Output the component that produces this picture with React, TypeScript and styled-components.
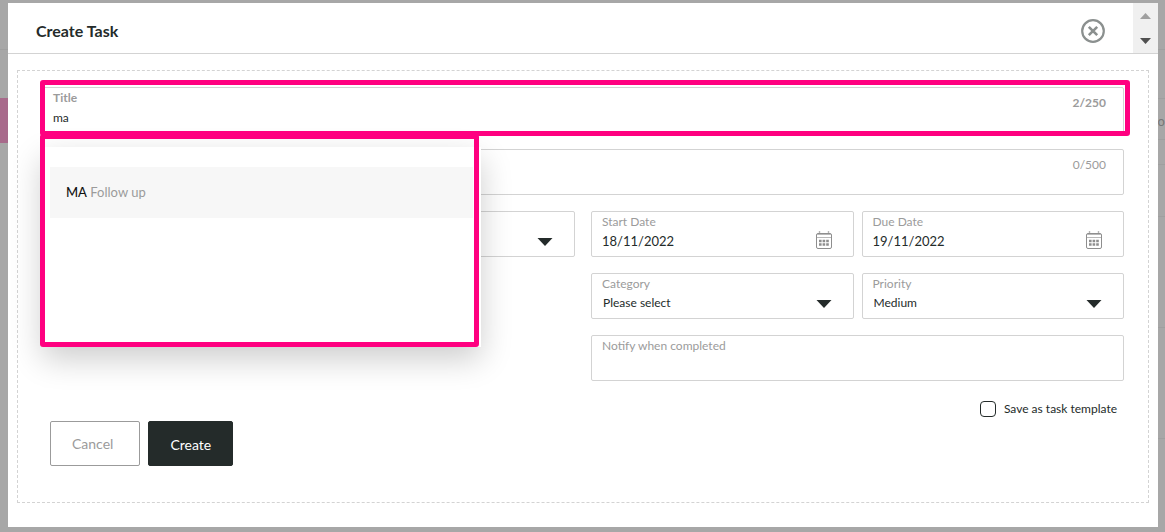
import React from "react";
import styled, { createGlobalStyle } from "styled-components";

const ink = "#242b2a";
const muted = "#9b9b9b";
const line = "#d3d3d3";
const accent = "#ff0080";

const GlobalStyle = createGlobalStyle`
  * { box-sizing: border-box; }
  body { margin: 0; background: #a7a7a7; font-family: Lato, "Liberation Sans", sans-serif; color: ${ink}; }
  button, input, select { font-family: inherit; color: inherit; }
`;

const Page = styled.div`
  position: relative;
  min-height: 100vh;
  padding: 3px 7px 5px 8px;
  overflow: hidden;
`;

const Backdrop = styled.div`
  position: absolute;
  inset: 0;
  display: flex;
  justify-content: space-between;
`;

const Edge = styled.div`
  width: 24px;
  padding-top: 49px;
`;

const Band = styled.div<{ $height: number; $color?: string }>`
  height: ${(p) => p.$height}px;
  background: ${(p) => p.$color ?? "transparent"};
  border-top: 1px solid ${(p) => p.$color ?? "#9f9f9f"};
`;

const BandText = styled.span`
  display: flex;
  justify-content: flex-end;
  padding-top: 13px;
  font-size: 13px;
  line-height: 18px;
  color: #777;
`;

const Modal = styled.section`
  position: relative;
  min-height: calc(100vh - 8px);
  background: #fff;
  display: flex;
  flex-direction: column;
`;

const Header = styled.header`
  display: flex;
  align-items: center;
  height: 51px;
  border-bottom: 1px solid ${line};
  padding-left: 28px;
`;

const Heading = styled.h1`
  flex: 1;
  margin: 0;
  padding-top: 6px;
  font-size: 16px;
  line-height: 20px;
  font-weight: 700;
`;

const CloseButton = styled.button`
  display: flex;
  margin: 6px 28px 0 0;
  padding: 0;
  border: 0;
  background: none;
`;

const Scroller = styled.div`
  display: flex;
  flex-direction: column;
  width: 25px;
  height: 50px;
  background: #f0f0f0;
`;

const ScrollButton = styled.button`
  flex: 1;
  display: flex;
  align-items: center;
  justify-content: center;
  padding: 0;
  border: 0;
  background: none;
`;

const Panel = styled.form`
  display: flex;
  flex-direction: column;
  gap: 16px;
  margin: 16px 9px 24px;
  padding: 16px 24px 36px;
  border: 1px dashed ${line};
`;

const Columns = styled.div`
  display: grid;
  grid-template-columns: 1fr 1fr;
  gap: 16px;
  align-items: start;
`;

const Pair = styled.div`
  display: grid;
  grid-template-columns: 1fr 1fr;
  gap: 8px;
`;

const Stack = styled.div`
  display: flex;
  flex-direction: column;
  gap: 16px;
`;

const TitleArea = styled.div`
  position: relative;
`;

const Field = styled.div`
  display: flex;
  height: 46px;
  padding-left: 10px;
  border: 1px solid ${line};
  border-radius: 2px;
  background: #fff;
`;

const FieldBody = styled.div`
  flex: 1;
  min-width: 0;
  display: flex;
  flex-direction: column;
  padding-top: 2px;
`;

const Label = styled.label<{ $bold?: boolean }>`
  font-size: 12px;
  line-height: 16px;
  font-weight: ${(p) => (p.$bold ? 700 : 400)};
  color: ${muted};
`;

const TextInput = styled.input<{ $large?: boolean }>`
  width: 100%;
  height: 22px;
  padding: 0;
  border: 0;
  outline: 0;
  background: none;
  font-size: ${(p) => (p.$large ? 13 : 12)}px;
`;

const Select = styled.select`
  appearance: none;
  width: 100%;
  height: 20px;
  padding: 0 0 0 1px;
  border: 0;
  outline: 0;
  background: none;
  font-size: 12px;
`;

const Counter = styled.span<{ $bold?: boolean }>`
  padding: 6px 17px 0 0;
  font-size: 12px;
  line-height: 18px;
  font-weight: ${(p) => (p.$bold ? 700 : 400)};
  color: ${muted};
`;

const IconSlot = styled.span`
  display: flex;
  justify-content: center;
  align-items: flex-end;
  width: 16px;
  margin-right: 21px;
  padding-bottom: 7px;
`;

const ArrowSlot = styled(IconSlot)`
  padding-bottom: 10px;
`;

const Highlight = styled.div`
  position: absolute;
  z-index: 2;
  inset: -7px -6px -3px -2px;
  border: 5px solid ${accent};
  border-radius: 3px;
  pointer-events: none;
`;

const Popup = styled.div`
  position: absolute;
  z-index: 1;
  top: 60px;
  left: 0;
  width: 439px;
  height: 200px;
  padding: 20px 8px;
  background: #fff;
  box-shadow: 0 12px 30px rgba(0, 0, 0, 0.2);
`;

const PopupHighlight = styled.div`
  position: absolute;
  z-index: 2;
  top: 47px;
  left: -2px;
  width: 439px;
  height: 213px;
  border: 5px solid ${accent};
  border-radius: 3px;
  pointer-events: none;
`;

const Option = styled.button`
  display: block;
  width: 100%;
  height: 51px;
  padding: 0 16px 2px;
  border: 0;
  background: #f7f7f7;
  text-align: left;
  font-size: 13px;
`;

const Match = styled.span`
  color: #111;
  font-weight: 500;
`;

const Rest = styled.span`
  color: ${muted};
`;

const SaveRow = styled.label`
  align-self: flex-end;
  display: flex;
  align-items: center;
  gap: 8px;
  margin-top: 4px;
  padding-right: 7px;
  font-size: 12px;
  line-height: 16px;
`;

const Checkbox = styled.input`
  appearance: none;
  width: 16px;
  height: 16px;
  margin: 0;
  border: 1px solid ${ink};
  border-radius: 4px;
`;

const Actions = styled.div`
  display: flex;
  gap: 8px;
  margin-top: -12px;
  padding-left: 8px;
`;

const ActionButton = styled.button<{ $primary?: boolean }>`
  height: 45px;
  padding: ${(p) => (p.$primary ? "2px 21px 0" : "0 26px 0 21px")};
  border: 1px solid ${(p) => (p.$primary ? ink : muted)};
  border-radius: 2px;
  background: ${(p) => (p.$primary ? ink : "#fff")};
  color: ${(p) => (p.$primary ? "#fff" : muted)};
  font-size: 14px;
`;

const Arrow = () => (
  <svg width="16" height="8" viewBox="0 0 16 8">
    <path d="M0.5 0H15.5L8 8Z" fill={ink} />
  </svg>
);

const Calendar = () => (
  <svg width="16" height="18" viewBox="0 0 16 18" fill="none">
    <path d="M3.5 0V3M12.5 0V3" stroke="#b4b4b4" strokeWidth="1.4" />
    <rect x="0.5" y="2.5" width="15" height="15" rx="1.5" stroke="#8e8e8e" />
    <path d="M1 3.5H15M1 6.5H15" stroke="#b9b9b9" />
    <path d="M3 10H13M3 13.5H13" stroke="#8e8e8e" strokeWidth="2.4" strokeDasharray="2.6 1" />
  </svg>
);

function SelectField({ id, label, value }: { id: string; label: string; value: string }) {
  return (
    <Field>
      <FieldBody>
        <Label htmlFor={id}>{label}</Label>
        <Select id={id} defaultValue={value}>
          <option>{value}</option>
        </Select>
      </FieldBody>
      <ArrowSlot><Arrow /></ArrowSlot>
    </Field>
  );
}

function DateField({ id, label, value }: { id: string; label: string; value: string }) {
  return (
    <Field>
      <FieldBody>
        <Label htmlFor={id}>{label}</Label>
        <TextInput id={id} $large defaultValue={value} />
      </FieldBody>
      <IconSlot><Calendar /></IconSlot>
    </Field>
  );
}

export default function App() {
  return (
    <Page>
      <GlobalStyle />
      <Backdrop>
        <Edge>
          <Band $height={49} />
          <Band $height={45} $color="#a86a8b" />
        </Edge>
        <Edge>
          <Band $height={49} />
          <Band $height={41}><BandText>Co</BandText></Band>
          <Band $height={25} />
          <Band $height={52} />
          <Band $height={111} />
          <Band $height={111} />
          <Band $height={90} />
        </Edge>
      </Backdrop>
      <Modal>
        <Header>
          <Heading>Create Task</Heading>
          <CloseButton type="button" aria-label="Close">
            <svg width="24" height="24" viewBox="0 0 24 24" fill="none" stroke="#8b908f">
              <circle cx="12" cy="12" r="10.8" strokeWidth="2.2" />
              <path d="M7.8 7.8L16.2 16.2M16.2 7.8L7.8 16.2" strokeWidth="2.6" />
            </svg>
          </CloseButton>
          <Scroller>
            <ScrollButton type="button" aria-label="Scroll up">
              <svg width="11" height="6" viewBox="0 0 11 6"><path d="M0 6L5.5 0L11 6Z" fill="#a0a0a0" /></svg>
            </ScrollButton>
            <ScrollButton type="button" aria-label="Scroll down">
              <svg width="11" height="6" viewBox="0 0 11 6"><path d="M0 0L5.5 6L11 0Z" fill="#505050" /></svg>
            </ScrollButton>
          </Scroller>
        </Header>
        <Panel>
          <TitleArea>
            <Field>
              <FieldBody>
                <Label htmlFor="title" $bold>Title</Label>
                <TextInput id="title" defaultValue="ma" />
              </FieldBody>
              <Counter $bold>2/250</Counter>
            </Field>
            <Popup>
              <Option type="button"><Match>MA</Match> <Rest>Follow up</Rest></Option>
            </Popup>
            <Highlight />
            <PopupHighlight />
          </TitleArea>
          <Field>
            <FieldBody>
              <TextInput aria-label="Description" />
            </FieldBody>
            <Counter>0/500</Counter>
          </Field>
          <Columns>
            <Field>
              <FieldBody>
                <Select aria-label="Assignee" />
              </FieldBody>
              <ArrowSlot><Arrow /></ArrowSlot>
            </Field>
            <Stack>
              <Pair>
                <DateField id="start" label="Start Date" value="18/11/2022" />
                <DateField id="due" label="Due Date" value="19/11/2022" />
              </Pair>
              <Pair>
                <SelectField id="category" label="Category" value="Please select" />
                <SelectField id="priority" label="Priority" value="Medium" />
              </Pair>
              <Field>
                <FieldBody>
                  <Label htmlFor="notify">Notify when completed</Label>
                  <TextInput id="notify" />
                </FieldBody>
              </Field>
              <SaveRow>
                <Checkbox type="checkbox" />
                Save as task template
              </SaveRow>
            </Stack>
          </Columns>
          <Actions>
            <ActionButton type="button">Cancel</ActionButton>
            <ActionButton type="button" $primary>Create</ActionButton>
          </Actions>
        </Panel>
      </Modal>
    </Page>
  );
}
